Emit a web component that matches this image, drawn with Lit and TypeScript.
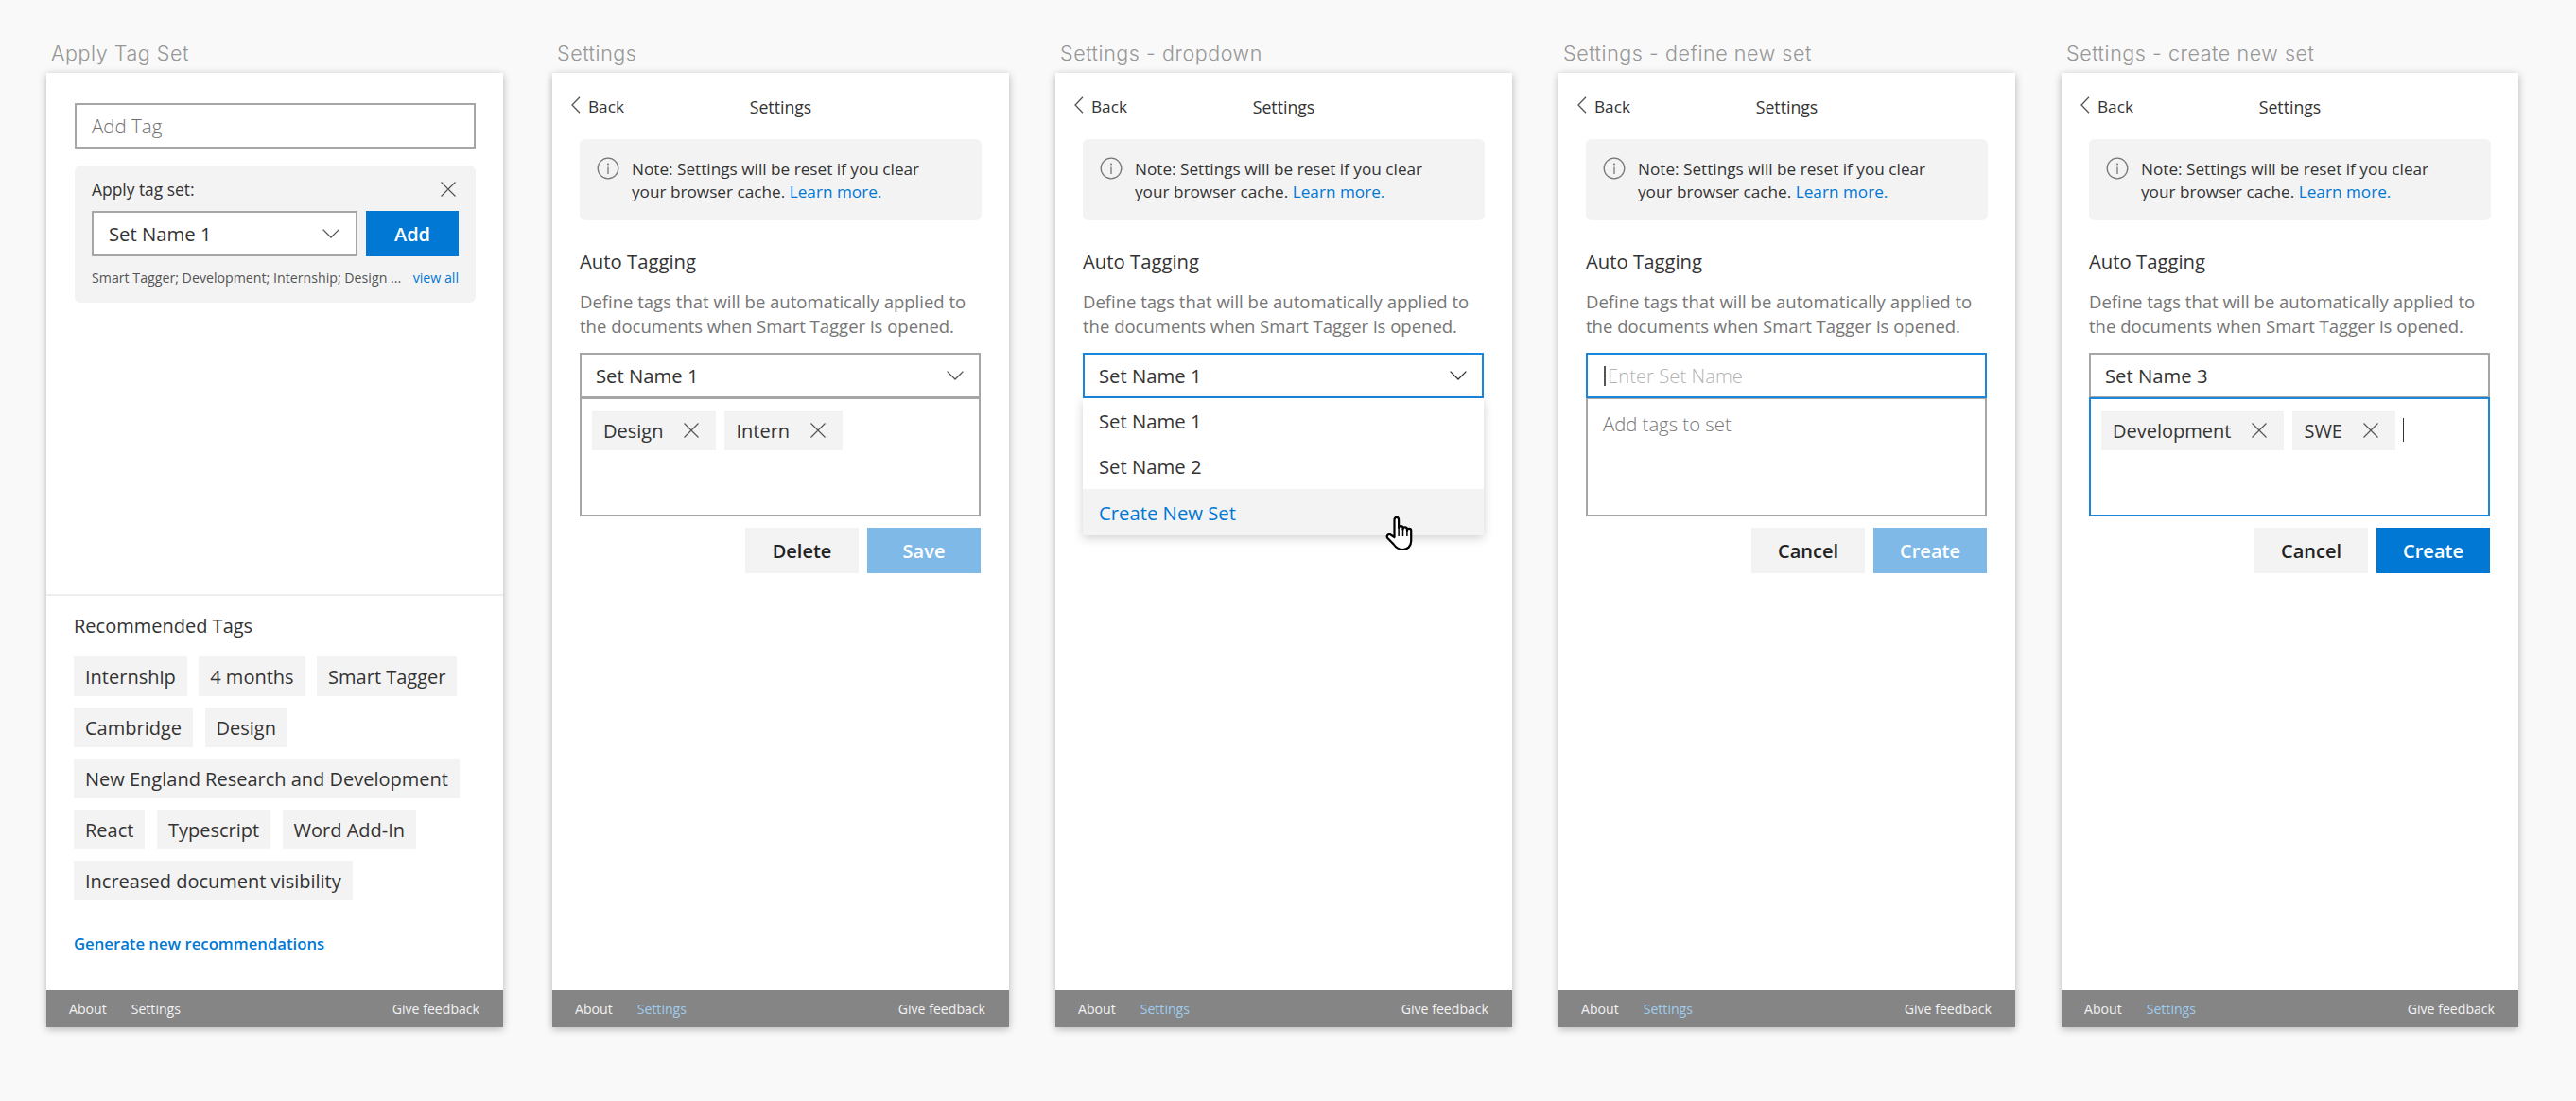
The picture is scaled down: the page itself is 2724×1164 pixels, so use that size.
import { LitElement, html, css } from "lit";
import { customElement } from "lit/decorators.js";

const X = (c = "#555") => html`<svg class="x" width="16" height="16" viewBox="0 0 16 16"><path d="M.5.5l15 15M15.5.5l-15 15" fill="none" stroke=${c} stroke-width="1.2"/></svg>`;
const CHEV = (c = "#555") => html`<svg class="chev" width="18" height="10" viewBox="0 0 18 10"><path d="M.6.6L9 9l8.4-8.4" fill="none" stroke=${c} stroke-width="1.3"/></svg>`;
const HAND = html`<svg class="hand" width="32" height="38" viewBox="0 0 32 38"><path d="M9.5 23V4.500c0-3.600 4.600-3.600 4.600 0V13c0-2.600 4.400-2.600 4.400 0v1.400c0-2.600 4.400-2.600 4.400 0v1.400c0-2.500 4.300-2.500 4.300 0V27c0 5.600-3.800 9-8.800 9-5 0-7.300-2-9.700-5.500L2.400 24c-2-2.600 1.200-5.400 3.600-3.200z" fill="#fff" stroke="#000" stroke-width="2.200" stroke-linejoin="round"/><path d="M14.100 13v9M18.500 14.400V22M22.900 15.800V22" stroke="#000" stroke-width="1.500" fill="none"/></svg>`;

@customElement("app-root")
export class AppRoot extends LitElement {
  static styles = css`
    :host { display: block; width: 2724px; height: 1164px; background: #f9f9f9; font-family: "Open Sans", sans-serif; color: #333; overflow: hidden; }
    * { box-sizing: border-box; }
    .page { display: flex; gap: 49px; padding-left: 49px; }
    .col { width: 483px; flex: none; }
    .col.first { margin-right: 3px; }
    .title { height: 77px; padding: 41px 0 0 5px; font-family: Inter, sans-serif; font-size: 21.500px; line-height: 30px; color: #979797; letter-spacing: .55px; font-weight: 300; white-space: nowrap; }
    .card { position: relative; height: 1009px; background: #fff; box-shadow: 0 2px 8px rgba(0,0,0,.28); display: flex; flex-direction: column; }
    .main { flex: 1; display: flex; flex-direction: column; min-height: 0; }
    .foot { height: 39px; background: #858585; display: flex; align-items: center; padding: 0 25px 0 24px; font-size: 14.100px; color: #f2f2f2; flex: none; }
    .foot .settings { margin-left: 26px; }
    .foot .settings.on { color: #9fcbec; }
    .foot .fb { margin-left: auto; }

    .apply { padding: 32px 29px 0 30px; flex: 1; }
    .addtag { height: 48px; border: 2px solid #a6a6a6; display: flex; align-items: center; padding-left: 16px; font-size: 20.500px; font-weight: 300; color: #6f6f6f; }
    .panel { margin-top: 18px; background: #f3f3f3; border-radius: 6px; height: 145px; padding: 15px 18px 0 18px; }
    .panel-top { display: flex; justify-content: space-between; align-items: center; height: 20px; font-size: 17.400px; padding-right: 3px; }
    .panel-row { display: flex; gap: 9px; margin-top: 13px; }
    .sel { flex: 1; height: 48px; background: #fff; border: 2px solid #a6a6a6; display: flex; align-items: center; justify-content: space-between; padding: 0 17px 0 16px; font-size: 20.300px; }
    .btn { height: 48px; display: flex; align-items: center; justify-content: center; font-size: 20px; font-weight: 600; }
    .btn.primary { background: #0078d4; color: #fff; }
    .btn.faded { background: #7fb9e8; color: #fff; }
    .btn.plain { background: #f3f3f3; color: #222; }
    .add { width: 98px; }
    .panel-meta { display: flex; justify-content: space-between; margin-top: 12px; font-size: 14.200px; line-height: 22px; color: #555; white-space: nowrap; }
    a { color: #0078d4; text-decoration: none; }

    .rec { border-top: 2px solid #eee; padding: 18px 29px 0 29px; height: 419px; flex: none; }
    .rec h3 { margin: 0; font-size: 20px; line-height: 28px; font-weight: 400; color: #333; }
    .chips { display: flex; flex-wrap: wrap; gap: 12px 12.500px; margin-top: 18px; }
    .chip { height: 42px; background: #f3f3f3; padding: 0 12px; display: flex; align-items: center; font-size: 20px; color: #333; white-space: nowrap; }
    .gen { display: block; margin-top: 33px; font-size: 16.700px; line-height: 26px; font-weight: 600; }

    .head { height: 70px; position: relative; display: flex; align-items: center; justify-content: center; font-size: 17.700px; padding-top: 2px; }
    .back { position: absolute; left: 20px; top: 24px; display: flex; align-items: center; gap: 8px; font-size: 17.200px; }
    .back svg { margin-top: -4px; }
    .body { padding: 0 29px; flex: 1; position: relative; }
    .note { height: 86px; background: #f3f3f3; border-radius: 6px; display: flex; padding: 20px 18px 0 18px; font-size: 17.200px; line-height: 24px; color: #333; gap: 13px; }
    .note svg { flex: none; margin-top: -1px; }
    .auto { margin: 28px 0 0; font-size: 20.300px; line-height: 30px; font-weight: 400; color: #333; }
    .desc { margin: 15px 0 0; font-size: 18.500px; line-height: 26px; color: #767676; white-space: nowrap; height: 67px; }
    .combo { position: relative; margin-right: 1px; }
    .row { height: 48px; border: 2px solid #a6a6a6; display: flex; align-items: center; justify-content: space-between; padding: 0 16px 0 15px; font-size: 20.300px; color: #333; }
    .row.focus, .box.focus { border-color: #1a86dc; position: relative; }
    .box { height: 126px; margin-top: -1px; border: 2px solid #a6a6a6; padding: 12px 11px; display: flex; gap: 9px; align-items: flex-start; }
    .tag { height: 42px; background: #f3f3f3; display: flex; align-items: center; padding: 0 18px 0 12px; font-size: 20px; gap: 22px; white-space: nowrap; }
    .caret1 { width: 1px; height: 25px; background: #333; margin: 8px 0 0 -1px; }
    .caret2 { width: 2px; height: 21px; background: #555; margin-right: 2px; flex: none; }
    .ph { color: #b3b3b3; font-weight: 300; }
    .row.ph-row { justify-content: flex-start; padding-left: 17px; }
    .addtags { font-size: 20.300px; font-weight: 300; color: #777; padding: 0 5px; }
    .actions { display: flex; justify-content: flex-end; gap: 9px; margin: 12px 1px 0 0; }
    .actions .btn { width: 120px; }
    .menu { position: absolute; left: 0; right: 0; top: 48px; background: #fff; box-shadow: 0 3px 10px rgba(0,0,0,.18); z-index: 2; font-size: 20.300px; }
    .menu div { height: 48px; padding-left: 17px; display: flex; align-items: center; }
    .menu .hover { height: 49px; background: #f3f3f3; color: #0078d4; }
    .hand { position: absolute; left: 320px; top: 172px; z-index: 3; }
  `;

  private settings(title: string, combo: unknown, actions: unknown) {
    return html`<div class="col">
      <div class="title">${title}</div>
      <div class="card">
        <div class="main">
          <div class="head">
            <div class="back"><svg width="10" height="18" viewBox="0 0 10 18"><path d="M9 .8L1 9l8 8.200" fill="none" stroke="#555" stroke-width="1.300"/></svg><span>Back</span></div>
            Settings
          </div>
          <div class="body">
            <div class="note">
              <svg width="24" height="24" viewBox="0 0 24 24"><circle cx="12" cy="12" r="10.800" fill="none" stroke="#777" stroke-width="1.300"/><path d="M12 10.500V18" stroke="#777" stroke-width="1.300"/><circle cx="12" cy="7.500" r="1" fill="#777"/></svg>
              <div>Note: Settings will be reset if you clear<br />your browser cache. <a href="#">Learn more.</a></div>
            </div>
            <h3 class="auto">Auto Tagging</h3>
            <p class="desc">Define tags that will be automatically applied to<br />the documents when Smart Tagger is opened.</p>
            ${combo}
            ${actions}
          </div>
        </div>
        ${this.foot(true)}
      </div>
    </div>`;
  }

  private foot(on: boolean) {
    return html`<div class="foot"><span>About</span><span class="settings ${on ? "on" : ""}">Settings</span><span class="fb">Give feedback</span></div>`;
  }

  private tag(t: string) {
    return html`<div class="tag"><span>${t}</span>${X()}</div>`;
  }

  private actions(a: string, b: string, cls: string) {
    return html`<div class="actions"><div class="btn plain">${a}</div><div class="btn ${cls}">${b}</div></div>`;
  }

  render() {
    const rec = ["Internship", "4 months", "Smart Tagger", "Cambridge", "Design", "New England Research and Development", "React", "Typescript", "Word Add-In", "Increased document visibility"];
    return html`<div class="page">
      <div class="col first">
        <div class="title">Apply Tag Set</div>
        <div class="card">
          <div class="main">
            <div class="apply">
              <div class="addtag">Add Tag</div>
              <div class="panel">
                <div class="panel-top"><span>Apply tag set:</span>${X()}</div>
                <div class="panel-row">
                  <div class="sel"><span>Set Name 1</span>${CHEV()}</div>
                  <div class="btn primary add">Add</div>
                </div>
                <div class="panel-meta"><span>Smart Tagger; Development; Internship; Design ...</span><a href="#">view all</a></div>
              </div>
            </div>
            <div class="rec">
              <h3>Recommended Tags</h3>
              <div class="chips">${rec.map((r) => html`<div class="chip">${r}</div>`)}</div>
              <a class="gen" href="#">Generate new recommendations</a>
            </div>
          </div>
          ${this.foot(false)}
        </div>
      </div>
      ${this.settings("Settings", html`<div class="combo">
        <div class="row"><span>Set Name 1</span>${CHEV()}</div>
        <div class="box">${this.tag("Design")}${this.tag("Intern")}</div>
      </div>`, this.actions("Delete", "Save", "faded"))}
      ${this.settings("Settings - dropdown", html`<div class="combo">
        <div class="row focus"><span>Set Name 1</span>${CHEV("#333")}</div>
        <div class="box"></div>
        <div class="menu"><div>Set Name 1</div><div>Set Name 2</div><div class="hover">Create New Set</div></div>
        ${HAND}
      </div>`, html`<div class="actions"></div>`)}
      ${this.settings("Settings - define new set", html`<div class="combo">
        <div class="row focus ph-row"><span class="caret2"></span><span class="ph">Enter Set Name</span></div>
        <div class="box"><div class="addtags">Add tags to set</div></div>
      </div>`, this.actions("Cancel", "Create", "faded"))}
      ${this.settings("Settings - create new set", html`<div class="combo">
        <div class="row"><span>Set Name 3</span></div>
        <div class="box focus">${this.tag("Development")}${this.tag("SWE")}<span class="caret1"></span></div>
      </div>`, this.actions("Cancel", "Create", "primary"))}
    </div>`;
  }
}
